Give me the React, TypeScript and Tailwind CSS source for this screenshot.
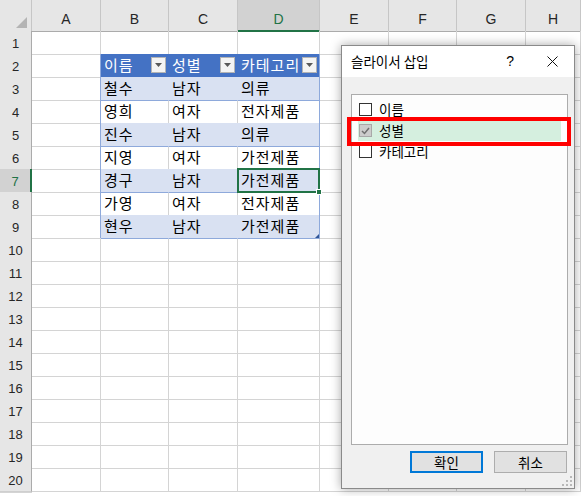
import React from 'react';

const COLS = ['A', 'B', 'C', 'D', 'E', 'F', 'G', 'H'];
const ROW_GRID = 'grid grid-cols-[32px_69px_68px_69px_82px_69px_68px_69px_1fr] h-[23px]';

const HEADERS = ['이름', '성별', '카테고리'];
const DATA = [
    ['철수', '남자', '의류'],
    ['영희', '여자', '전자제품'],
    ['진수', '남자', '의류'],
    ['지영', '여자', '가전제품'],
    ['경구', '남자', '가전제품'],
    ['가영', '여자', '전자제품'],
    ['현우', '남자', '가전제품'],
];

const FilterButton = () => (
    <div className="w-[15px] h-[16px] mr-[2px] shrink-0 border border-[#b4b4b4] bg-[#f4f4f4] flex items-center justify-center">
        <svg width="7" height="4" viewBox="0 0 7 4">
            <polygon points="0,0 7,0 3.5,4" fill="#595959" />
        </svg>
    </div>
);

const Checkbox = ({ checked }: { checked?: boolean }) => (
    <div
        className={
            checked
                ? 'w-[13px] h-[13px] shrink-0 border border-[#a8a8a8] bg-[#cccccc] flex items-center justify-center'
                : 'w-[13px] h-[13px] shrink-0 border border-[#333333] bg-white'
        }
    >
        {checked && (
            <svg width="9" height="8" viewBox="0 0 9 8">
                <polyline points="1,4 3.5,6.5 8,1" fill="none" stroke="#6f6f6f" strokeWidth="1.5" />
            </svg>
        )}
    </div>
);

const ColumnHeader = () => (
    <div className="grid grid-cols-[32px_69px_68px_69px_82px_69px_68px_69px_1fr] h-[31px] font-['Liberation_Sans',sans-serif] text-[14px] text-[#262626]">
        <div className="bg-[#e6e6e6] border-r border-b border-r-[#c6c6c6] border-b-[#ababab] flex items-end justify-end pr-[4px] pb-[3px]">
            <svg width="11" height="11" viewBox="0 0 11 11">
                <polygon points="11,0 11,11 0,11" fill="#b4b4b4" />
            </svg>
        </div>
        {COLS.map(c => (
            <div
                key={c}
                className={
                    c === 'D'
                        ? 'bg-[#d2d2d2] border-r border-b-2 border-r-[#c6c6c6] border-b-[#217346] flex items-center justify-center pt-[9px] text-[#217346]'
                        : 'bg-[#e6e6e6] border-r border-b border-r-[#c6c6c6] border-b-[#ababab] flex items-center justify-center pt-[8px]'
                }
            >
                {c}
            </div>
        ))}
        <div className="bg-[#e6e6e6] border-b border-b-[#ababab]" />
    </div>
);

const SheetRow = ({ r }: { r: number }) => {
    const inTable = r >= 2 && r <= 9;
    const isHead = r === 2;
    const banded = r === 3 || r === 5 || r === 7 || r === 9;
    const values = isHead ? HEADERS : inTable ? DATA[r - 3] : ['', '', ''];

    const cellCls = (i: number) => {
        if (isHead) {
            return i === 2
                ? 'bg-[#4472c4] text-white border-r border-b border-r-[#8ea9db] border-b-[#4472c4] flex items-center pl-[3px]'
                : 'bg-[#4472c4] text-white border-r border-b border-[#4472c4] flex items-center pl-[3px]';
        }
        if (inTable && banded) {
            return i === 2
                ? 'relative bg-[#d9e1f2] border-r border-b border-r-[#8ea9db] border-b-[#8ea9db] flex items-center pl-[3px] whitespace-nowrap'
                : 'relative bg-[#d9e1f2] border-r border-b border-r-[#d9e1f2] border-b-[#8ea9db] flex items-center pl-[3px] whitespace-nowrap';
        }
        if (inTable) {
            return i === 2
                ? 'bg-white border-r border-b border-r-[#8ea9db] border-b-[#8ea9db] flex items-center pl-[3px] whitespace-nowrap'
                : 'bg-white border-r border-b border-r-[#d4d4d4] border-b-[#8ea9db] flex items-center pl-[3px] whitespace-nowrap';
        }
        if (r === 1) {
            return 'border-r border-b border-r-[#d4d4d4] border-b-[#8ea9db]';
        }
        return 'border-r border-b border-[#d4d4d4]';
    };

    return (
        <div className={ROW_GRID}>
            <div
                className={
                    r === 7
                        ? "bg-[#d2d2d2] border-r-2 border-b border-r-[#217346] border-b-[#cfcfcf] flex items-center justify-center pt-[3px] font-['Liberation_Sans',sans-serif] text-[13px] text-[#217346]"
                        : "bg-[#e6e6e6] border-r border-b border-r-[#ababab] border-b-[#cfcfcf] flex items-center justify-center pt-[3px] font-['Liberation_Sans',sans-serif] text-[13px] text-[#262626]"
                }
            >
                {r}
            </div>
            <div
                className={
                    inTable
                        ? 'border-r border-b border-r-[#8ea9db] border-b-[#d4d4d4]'
                        : 'border-r border-b border-[#d4d4d4]'
                }
            />
            {values.map((v, i) => (
                <div key={i} className={cellCls(i)}>
                    <span className="flex-1 min-w-0 overflow-x-clip whitespace-nowrap text-[15px] tracking-[1px] leading-[22px]">{v}</span>
                    {isHead && <FilterButton />}
                    {r === 7 && i === 2 && (
                        <div className="absolute -top-px -left-px -right-px -bottom-px border-2 border-[#217346] z-10">
                            <div className="absolute -right-[4px] -bottom-[4px] w-[6px] h-[6px] bg-[#217346] border border-white" />
                        </div>
                    )}
                    {r === 9 && i === 2 && (
                        <svg className="absolute right-0 bottom-0" width="4" height="4" viewBox="0 0 4 4">
                            <polygon points="4,0 4,4 0,4" fill="#2f5597" />
                        </svg>
                    )}
                </div>
            ))}
            <div className="border-r border-b border-[#d4d4d4]" />
            <div className="border-r border-b border-[#d4d4d4]" />
            <div className="border-r border-b border-[#d4d4d4]" />
            <div className="border-r border-b border-[#d4d4d4]" />
            <div className="border-b border-[#d4d4d4]" />
        </div>
    );
};

const SlicerDialog = () => (
    <div className="absolute left-[341px] top-[45px] w-[234px] h-[444px] bg-[#f0f0f0] border border-[#8a8a8a] shadow-[0_0_10px_rgba(0,0,0,0.35)] flex flex-col text-[13.5px] text-black z-20">
        <div className="h-[31px] bg-white flex items-center pl-[9px] shrink-0">
            <span>슬라이서 삽입</span>
            <span className="ml-auto mr-[33px] font-['Liberation_Sans',sans-serif] text-[14px]">?</span>
            <svg className="mr-[16px]" width="11" height="11" viewBox="0 0 11 11">
                <path d="M0.5 0.5 L10.5 10.5 M10.5 0.5 L0.5 10.5" stroke="#111" strokeWidth="1" />
            </svg>
        </div>
        <div className="mt-[17px] ml-[9px] mr-[6px] h-[351px] border border-[#acacac] bg-[#fdfdfd] pt-[4px] px-[6px] shrink-0">
            <div className="h-[21px] flex items-center gap-[7px] pl-[1px]">
                <Checkbox />
                <span>이름</span>
            </div>
            <div className="h-[21px] flex items-center gap-[7px] pl-[1px] bg-[#d5efdf]">
                <Checkbox checked />
                <span>성별</span>
            </div>
            <div className="h-[21px] flex items-center gap-[7px] pl-[1px]">
                <Checkbox />
                <span>카테고리</span>
            </div>
        </div>
        <div className="mt-[6px] flex justify-end gap-[11px] pr-[7px]">
            <button className="w-[73px] h-[22px] bg-[#e1e1e1] border-2 border-[#0078d7] flex items-center justify-center">확인</button>
            <button className="w-[73px] h-[22px] bg-[#e1e1e1] border border-[#adadad] flex items-center justify-center">취소</button>
        </div>
        <svg className="absolute right-[2px] bottom-[2px]" width="10" height="10" viewBox="0 0 10 10">
            <rect x="8" y="0" width="2" height="2" fill="#b8b8b8" />
            <rect x="4" y="4" width="2" height="2" fill="#b8b8b8" />
            <rect x="8" y="4" width="2" height="2" fill="#b8b8b8" />
            <rect x="0" y="8" width="2" height="2" fill="#b8b8b8" />
            <rect x="4" y="8" width="2" height="2" fill="#b8b8b8" />
            <rect x="8" y="8" width="2" height="2" fill="#b8b8b8" />
        </svg>
    </div>
);

export default function App() {
    const rows = Array.from({ length: 20 }, (_, i) => i + 1);
    return (
        <div className="relative w-[581px] h-[496px] overflow-hidden bg-white font-['Noto_Sans_CJK_KR',sans-serif] text-[16px] text-black">
            <ColumnHeader />
            {rows.map(r => (
                <SheetRow key={r} r={r} />
            ))}
            <SlicerDialog />
            {/* red highlight around the selected slicer field */}
            <div className="absolute left-[347px] top-[117px] w-[224px] h-[29px] border-4 border-[#ff0000] z-30" />
        </div>
    );
}
